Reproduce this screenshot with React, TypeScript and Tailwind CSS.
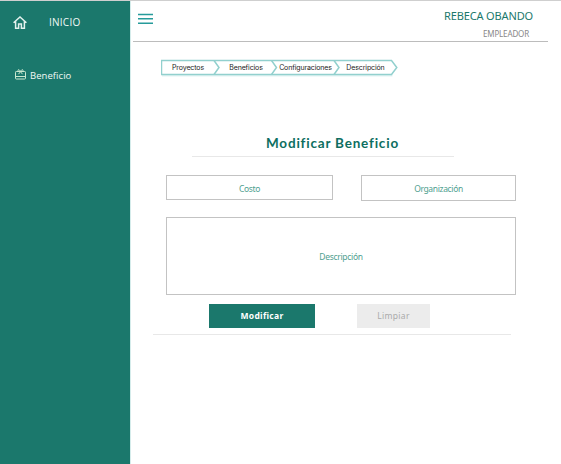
import React from "react";

const crumbs = [
  { label: "Proyectos", box: "w-[52px]" },
  { label: "Beneficios", box: "w-[64px]" },
  { label: "Configuraciones", box: "w-[55px]" },
  { label: "Descripción", box: "w-[65px]" },
];

function HomeIcon() {
  return (
    <svg className="h-[13px] w-[14px]" viewBox="0 0 14 13" fill="none" stroke="#e3f1ed" strokeWidth="1.5">
      <path d="M0.6 6.8 7 1l6.4 5.8M2.6 5.2v7h3V8.1h2.8v4.1h3v-7" />
    </svg>
  );
}

function GiftCardIcon() {
  return (
    <svg className="h-[11px] w-[11px]" viewBox="0 0 11 11" fill="none" stroke="#c9e8cf" strokeWidth="1">
      <rect x="0.5" y="2.5" width="10" height="7.5" rx="0.8" />
      <path d="M0.5 7.5h10M5.5 2.7 3.5 5.2M5.5 2.7l2 2.5" />
      <path d="M5.5 2.5C4.8.8 3.2.1 2.9 1.2c-.2.9 1 1.3 2.6 1.3ZM5.5 2.5C6.2.8 7.8.1 8.1 1.2c.2.9-1 1.3-2.6 1.3Z" />
    </svg>
  );
}

function Breadcrumbs() {
  return (
    <nav className="relative ml-[30px] mt-[17px] flex h-[18px] w-[240px] items-start pl-[1px]">
      <svg className="absolute inset-0 h-[18px] w-[240px]" viewBox="0 0 240 18" fill="none">
        <path d="M1 16.5H231.5" stroke="#e2f4f3" strokeWidth="2" />
        <path d="M0.5 1.5H230.5L235.8 8.5 230.5 15.5H0.5Z" stroke="#92d0ce" strokeWidth="1.5" />
        <path d="M53 1.5 58 8.5 53 15.5M110.5 1.5 115.5 8.5 110.5 15.5M173 1.5 178 8.5 173 15.5" stroke="#92d0ce" strokeWidth="1.5" />
      </svg>
      {crumbs.map((c) => (
        <span key={c.label} className={`relative flex shrink-0 justify-center whitespace-nowrap font-['Inter',sans-serif] text-[7px] leading-[17px] tracking-[-0.12px] text-[#222] ${c.box}`}>
          {c.label}
        </span>
      ))}
    </nav>
  );
}

export default function App() {
  return (
    <div className="flex h-[464px] w-[561px] overflow-hidden border-t border-[#cfcfcf] bg-white font-['Open_Sans',sans-serif]">
      <aside className="h-full w-[130px] shrink-0 bg-[#1b786c] text-[#f1f8f6]">
        <div className="mt-[15px] flex h-[12px] items-center pl-[13px]">
          <HomeIcon />
          <span className="ml-[22px] text-[10px] tracking-[0.25px]">INICIO</span>
        </div>
        <div className="mt-[41px] flex h-[12px] items-center pl-[15px]">
          <span className="-mt-[2px]"><GiftCardIcon /></span>
          <span className="ml-[4px] mt-[2px] text-[9.5px] tracking-[0.05px]">Beneficio</span>
        </div>
      </aside>

      <main className="flex w-[431px] flex-col border-l border-[#d5eceb]">
        <header className="ml-[2px] flex h-[41px] w-[415px] items-start justify-between border-b border-[#bcbcbc]">
          <svg className="ml-[5px] mt-[12px] h-[12px] w-[15px]" viewBox="0 0 15 12" stroke="#269b9b" strokeWidth="1.6">
            <path d="M0 1.5h15M0 5.8h15M0 10.2h15" />
          </svg>
          <div className="mr-[15px] flex flex-col items-end whitespace-nowrap">
            <span className="mt-[7px] font-['Noto_Sans',sans-serif] text-[11px] leading-[16px] tracking-[-0.14px] text-[#1b786c]">REBECA OBANDO</span>
            <span className="mr-[4px] mt-[4px] font-['Noto_Sans',sans-serif] text-[8px] leading-[12px] tracking-[-0.15px] text-[#888]">EMPLEADOR</span>
          </div>
        </header>

        <Breadcrumbs />

        <section className="mt-[53px] flex flex-col">
          <h1 className="ml-[61px] flex h-[27px] w-[262px] justify-center whitespace-nowrap border-b border-[#e8e8e8] pl-[19px] pt-[4px] font-['Lato',sans-serif] text-[13.5px] font-bold leading-[18px] tracking-[0.8px] text-[#0d6e60]">
            Modificar Beneficio
          </h1>
          <div className="ml-[35px] mt-[18px] flex h-[26px] w-[350px] items-start justify-between font-['Noto_Sans',sans-serif] text-[8.5px] tracking-[-0.35px] text-[#4fa08f]">
            <div className="flex h-[25px] w-[167px] items-center justify-center border border-[#c3c3c3] pt-[3px]">Costo</div>
            <div className="flex h-[26px] w-[155px] items-center justify-center border border-[#c3c3c3] pt-[2px]">Organización</div>
          </div>
          <div className="ml-[35px] mt-[16px] flex h-[78px] w-[350px] items-center justify-center border border-[#c3c3c3] pt-[2px] font-['Noto_Sans',sans-serif] text-[8.5px] tracking-[-0.3px] text-[#4fa08f]">
            Descripción
          </div>
          <div className="ml-[22px] flex h-[40px] w-[358px] items-start border-b border-[#e8e8e8] pl-[56px] pt-[9px]">
            <button className="h-[24px] w-[106px] bg-[#1b786c] font-['Noto_Sans',sans-serif] text-[8.5px] font-bold tracking-[0.3px] text-white">Modificar</button>
            <button className="ml-[42px] h-[24px] w-[73px] bg-[#ececec] font-['Noto_Sans',sans-serif] text-[8.5px] tracking-[0.3px] text-[#aaa]">Limpiar</button>
          </div>
        </section>
      </main>
    </div>
  );
}
